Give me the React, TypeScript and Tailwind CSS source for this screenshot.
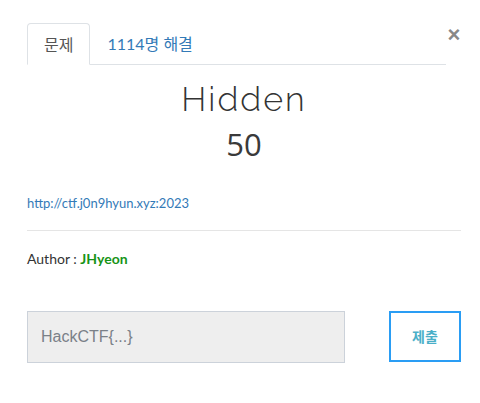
export default function App() {
  return (
    <div className="w-[480px] h-[403px] bg-white" style={{ fontFamily: "Lato, 'Noto Sans CJK KR', sans-serif" }}>
      <div className="pl-[27px] pr-[19px] pt-[23px]">
        <div className="flex items-start">
          <div className="flex flex-1 border-b border-[#dee2e6] h-[42px]">
            <div className="h-[42px] -mb-px px-[16px] flex items-center border border-[#dee2e6] border-b-white rounded-t-[4px] bg-white text-[16px] text-[#555]" style={{ fontFamily: "'Noto Sans CJK KR', sans-serif" }}>
              문제
            </div>
            <div className="h-[41px] px-[17px] flex items-center text-[16px] text-[#337ab7]" style={{ fontFamily: "Lato, 'Noto Sans CJK KR', sans-serif" }}>
              1114명 해결
            </div>
          </div>
          <button className="ml-[1px] mt-[2px] w-[14px] h-[20px] flex items-center justify-center text-[22px] leading-none text-[#888] font-bold" style={{ fontFamily: "'Liberation Sans', sans-serif" }}>
            ×
          </button>
        </div>
      </div>
      <div className="pl-[27px] pr-[19px]">
        <div className="text-center mt-[14px] text-[34px] leading-[40px] font-light tracking-[2px] text-[#333]" style={{ fontFamily: "Raleway, Lato, sans-serif" }}>
          Hidden
        </div>
        <div className="text-center mt-[5px] text-[31px] leading-[40px] font-normal text-[#3a3a3a]" style={{ fontFamily: "'Open Sans', sans-serif" }}>
          50
        </div>
        <div className="mt-[29px] text-[13px] leading-[20px] text-[#337ab7]">
          http://ctf.j0n9hyun.xyz:2023
        </div>
        <div className="mt-[17px] border-t border-[#e5e5e5]" />
        <div className="mt-[18px] text-[14px] leading-[20px] text-[#333]">
          Author : <span className="font-bold text-[#179417]">JHyeon</span>
        </div>
        <div className="mt-[42px] flex items-start justify-between">
          <div className="w-[318px] h-[52px] bg-[#eeeeee] border border-[#ccd2da] flex items-center pl-[13px] text-[16px] text-[#7a8088]" style={{ fontFamily: "'Liberation Sans', sans-serif" }}>
            HackCTF{"{...}"}
          </div>
          <button className="w-[72px] h-[51px] border-2 border-[#2a9df4] flex items-center justify-center text-[14px] font-bold text-[#4aafc8]" style={{ fontFamily: "'Noto Sans CJK KR', sans-serif" }}>
            제출
          </button>
        </div>
      </div>
    </div>
  );
}
